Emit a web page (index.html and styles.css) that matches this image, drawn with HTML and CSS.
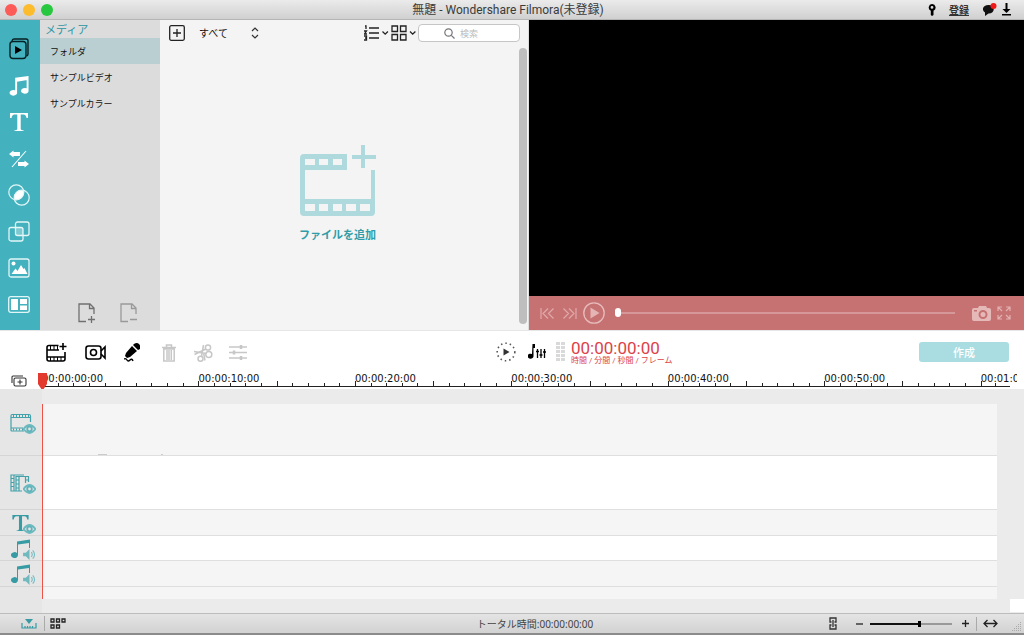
FILE: index.html
```html
<!DOCTYPE html>
<html lang="ja">
<head>
<meta charset="utf-8">
<meta name="viewport" content="width=device-width, initial-scale=1">
<title>無題 - Wondershare Filmora(未登録)</title>
<link rel="stylesheet" href="styles.css">
</head>
<body>
<svg class="defs" width="0" height="0" aria-hidden="true">
  <symbol id="note" viewBox="0 0 22 22"><path d="M7 3 21 1v4L9 7v11a4 3 0 1 1-2-2zM19 5h2v11a4 3 0 1 1-2-2z"/></symbol>
  <symbol id="tee" viewBox="0 0 20 20"><path d="M1 1h18v5h-1.500q-.500-3.500-3-3.500H11.700V17q0 1.300 3 1.500V19H5.300v-.500q3-.200 3-1.500V2.500H5.500q-2.500 0-3 3.500H1z"/></symbol>
  <symbol id="eye" viewBox="0 0 13 10"><path d="M.500 5Q6.500-3 12.500 5 6.500 13 .500 5z" fill="#e6e6e6" stroke="#6cb9bf" stroke-width="1.800"/><circle cx="6.500" cy="5" r="2.300" fill="none" stroke="#5fb3ba" stroke-width="1.800"/></symbol>
  <symbol id="sound" viewBox="0 0 14 12"><path d="M0 4h3l4-4v12L3 8H0z"/><path d="M9 3.500q2 2.500 0 5M10.500 1.500q4 4.500 0 9" fill="none" stroke="#77bcc2" stroke-width="1.200"/></symbol>
</svg>

<header class="titlebar">
  <div class="lights"><button class="light red" aria-label="閉じる"></button><button class="light yellow" aria-label="しまう"></button><button class="light green" aria-label="拡大"></button></div>
  <h1>無題 - Wondershare Filmora(未登録)</h1>
  <div class="account">
    <button aria-label="キー"><svg width="8" height="12" viewBox="0 0 8 12"><path fill-rule="evenodd" d="M4 0a3.500 3.500 0 0 1 1.500 6.700V11L4 12 2.800 11V6.700A3.500 3.500 0 0 1 4 0zM4 2a1.400 1.400 0 1 0 0 2.800A1.400 1.400 0 0 0 4 2z"/></svg></button>
    <a href="#register">登録</a>
    <button aria-label="メッセージ"><svg width="14" height="13" viewBox="0 0 14 13"><path d="M5.500 2c7 0 7 8.500 0 8.500L2 13v-3.500C-2 7 0 2 5.500 2z" fill="#111"/><circle cx="10.500" cy="3" r="3" fill="#f21818"/></svg></button>
    <button aria-label="ダウンロード"><svg width="9" height="13" viewBox="0 0 9 13"><path d="M3.500 0h2v6H8.500l-4 4-4-4h3zM0 11h9v1.500H0z"/></svg></button>
  </div>
</header>

<main class="workspace">
  <nav class="modes" aria-label="素材の種類">
    <button aria-label="メディア"><svg width="20" height="22" viewBox="0 0 20 22" fill="none" stroke="#062023" stroke-width="1.400"><path d="M3 3q.300-2 2-2h12q2 0 2 2v13q0 1.600-1.500 2"/><rect x="1" y="3.500" width="16" height="17" rx="3"/><path d="m6 8 7 4-7 4z" fill="#000" stroke="none"/></svg></button>
    <button aria-label="音楽"><svg width="22" height="21" fill="#fff"><use href="#note"/></svg></button>
    <button aria-label="テキスト"><svg width="20" height="20" fill="#fff"><use href="#tee"/></svg></button>
    <button aria-label="トランジション"><svg width="20" height="18" viewBox="0 0 20 18" fill="#fff"><path d="m0 4 4.500-3.500V2H11v4H4.500v1.500zM20 14l-4.500-3.500V12H9v4h6.500v1.500z"/><path d="M17 1 3 17" stroke="#fff" stroke-width="1.100"/></svg></button>
    <button aria-label="フィルター"><svg width="22" height="22" viewBox="0 0 22 22" fill="none" stroke="#e2f6f7" stroke-width="1.200"><path d="M15.700 6.500A7.500 7.500 0 0 1 6.300 15.500 7.500 7.500 0 0 1 15.700 6.500z" fill="#fff" stroke="none"/><circle cx="8.300" cy="8.300" r="7.500"/><circle cx="13.700" cy="13.700" r="7.500"/></svg></button>
    <button aria-label="オーバーレイ"><svg width="22" height="21" viewBox="0 0 22 21" fill="none" stroke="#e2f6f7" stroke-width="1.300"><rect x="1" y="6.500" width="14" height="13.500" rx="2"/><rect x="7.500" y="1" width="13.500" height="13.500" rx="2"/><path d="M7.500 6.500H15v8H7.500z" fill="#fff" fill-opacity=".3" stroke="none"/></svg></button>
    <button aria-label="エレメント"><svg width="22" height="20" viewBox="0 0 22 20"><rect x="1" y="1" width="20" height="18" rx="2" fill="none" stroke="#e2f6f7" stroke-width="1.300"/><circle cx="5.500" cy="5.500" r="2" fill="#fff"/><path d="m3.500 16 4-5.500 2 2.500 3.500-6 2.500 4 1-1 3 6z" fill="#fff"/></svg></button>
    <button aria-label="分割画面"><svg width="22" height="17" viewBox="0 0 22 17"><rect x=".7" y=".7" width="20.600" height="15.600" rx="2" fill="none" stroke="#e2f6f7" stroke-width="1.300"/><path d="M3 3h7v11H3zM12 3h7v5h-7zM12 9.500h7V14h-7z" fill="#fff"/></svg></button>
  </nav>

  <aside class="folders">
    <h2>メディア</h2>
    <ul>
      <li><button class="selected">フォルダ</button></li>
      <li><button>サンプルビデオ</button></li>
      <li><button>サンプルカラー</button></li>
    </ul>
    <div class="folder-actions">
      <button aria-label="フォルダを追加"><svg width="18" height="20" viewBox="0 0 18 20" fill="none" stroke="#707070" stroke-width="1.300"><path d="M8 18.500H1V1h11l4 4v6M11.500 1v4.500H16M13.500 13v7M10 16.500h7"/></svg></button>
      <button class="off" aria-label="フォルダを削除"><svg width="18" height="20" viewBox="0 0 18 20" fill="none" stroke="#999" stroke-width="1.300"><path d="M8 18.500H1V1h11l4 4v6M11.500 1v4.500H16M10 16.500h7"/></svg></button>
    </div>
    <button class="collapse" aria-label="パネルを閉じる"><svg width="7" height="12" viewBox="0 0 7 12"><path d="M7 0v12L0 6z" fill="#555"/></svg></button>
  </aside>

  <section class="library" aria-label="ライブラリ">
    <div class="library-bar">
      <button aria-label="追加"><svg width="16" height="16" viewBox="0 0 16 16" fill="none" stroke="#222" stroke-width="1.300"><rect x=".7" y=".7" width="14.600" height="14.600" rx="1.500"/><path d="M8 4v8M4 8h8"/></svg></button>
      <label class="filter"><select aria-label="表示"><option>すべて</option></select><svg width="8" height="12" viewBox="0 0 8 12" fill="none" stroke="#333" stroke-width="1.200"><path d="m1 4 3-3 3 3M1 8l3 3 3-3"/></svg></label>
      <button class="sort" aria-label="並べ替え"><svg width="25" height="16" viewBox="0 0 25 16" fill="none" stroke="#222" stroke-width="1.300"><path d="M5 3h10M5 8h10M5 13h10M1 1h1v3M0 6h2.500L.500 9H3M0 11h2.500v4H0M1 13h1"/><path d="m18.500 6.500 2.700 2.700 2.700-2.700"/></svg></button>
      <button aria-label="表示方法"><svg width="26" height="16" viewBox="0 0 26 16" fill="none" stroke="#222" stroke-width="1.300"><path d="M1 1h5.500v5.500H1zM9.500 1H15v5.500H9.500zM1 9.500h5.500V15H1zM9.500 9.500H15V15H9.500zM19 6.500l2.700 2.700 2.700-2.700"/></svg></button>
      <label class="search"><svg width="11" height="11" viewBox="0 0 11 11" fill="none" stroke="#777" stroke-width="1.200"><circle cx="4.500" cy="4.500" r="3.700"/><path d="m7.300 7.300 3.200 3.200"/></svg><input type="text" placeholder="検索" aria-label="検索"></label>
    </div>
    <button class="add-file">
      <svg width="76" height="72" viewBox="0 0 76 72" fill="#aed9dd"><path fill-rule="evenodd" d="M4 9h43v16H5v29h66V25h4v42q0 4-4 4H4q-4 0-4-4V13q0-4 4-4zM5 14v6h10v-6zM19 14v6h9v-6zM33 14v6h9v-6zM5 59v7h10v-7zM19 59v7h9v-7zM33 59v7h9v-7zM46 59v7h10v-7zM60 59v7h10v-7z"/><path d="M61 0h4v10h11v4H65v9h-4v-9H52v-4h9z"/></svg>
      <span>ファイルを追加</span>
    </button>
    <div class="scrollbar"></div>
  </section>

  <section class="preview" aria-label="プレビュー">
    <div class="screen"></div>
    <div class="player">
      <button aria-label="前へ"><svg width="14" height="11" viewBox="0 0 14 11" fill="none" stroke="#e1a9aa" stroke-width="1.200"><path d="M1 0v11M8 .500l-5 5 5 5M13.500.500l-5 5 5 5"/></svg></button>
      <button class="next" aria-label="次へ"><svg width="14" height="11" viewBox="0 0 14 11" fill="none" stroke="#e1a9aa" stroke-width="1.200"><path d="M13 0v11M6 .500l5 5-5 5M.500.500l5 5-5 5"/></svg></button>
      <button class="play" aria-label="再生"><svg width="22" height="22" viewBox="0 0 22 22"><circle cx="11" cy="11" r="10.200" fill="none" stroke="#e8bcbc" stroke-width="1.300"/><path d="m7.500 5.500 9 5.500-9 5.500z" fill="#e5b4b4"/></svg></button>
      <input class="seek" type="range" min="0" max="100" value="0" aria-label="再生位置">
      <button aria-label="スナップショット"><svg width="19" height="15" viewBox="0 0 19 15"><path fill-rule="evenodd" d="M6 2 7 0h7l1 2h2q2 0 2 2v9q0 2-2 2H2q-2 0-2-2V4q0-2 2-2zM11 4a4.500 4.500 0 1 0 0 9 4.500 4.500 0 0 0 0-9zM2 4v1.500h3V4zM11 6a2.500 2.500 0 1 1 0 5 2.500 2.500 0 0 1 0-5z" fill="#e6b9b9"/></svg></button>
      <button class="full" aria-label="全画面"><svg width="14" height="14" viewBox="0 0 14 14" fill="none" stroke="#e3b0b0" stroke-width="1.200"><path d="M1 5V1h4M1 1l4 4M9 1h4v4M13 1 9 5M1 9v4h4M1 13l4-4M13 9v4H9M13 13 9 9"/></svg></button>
    </div>
  </section>
</main>

<section class="toolbar">
  <div class="tools">
    <button aria-label="メディアを追加"><svg width="21" height="19" viewBox="0 0 21 19" fill="none" stroke="#000" stroke-width="1.600"><path d="M12.500 2.500H3Q1 2.500 1 4.500V16q0 2 2 2h14q2 0 2-2V9M1 7h12M1 14h18M17 0v7M13.500 3.500h7"/><path d="M4.500 3v4M8 3v4M11.500 3v4M4.500 14v4M8 14v4M11.500 14v4M15 14v4" stroke-width="1"/></svg></button>
    <button class="rec" aria-label="録画"><svg width="21" height="15" viewBox="0 0 21 15" fill="none" stroke="#000" stroke-width="1.600"><rect x="1" y="1" width="15" height="13" rx="2.500"/><circle cx="8.500" cy="7.500" r="3"/><path d="m16 6 4-4v11l-4-4"/></svg></button>
    <button class="mic" aria-label="録音"><svg width="16" height="19" viewBox="0 0 16 19"><path d="M10 1q3-2 5 0t1 5l-2 1-5-5zM8 3l5 5-7 6-3 1-2-2 1-3z"/><path d="M0 16q2-1 3 1t3 0 3 1" fill="none" stroke="#000" stroke-width="1.400"/></svg></button>
    <button class="trash" disabled aria-label="削除"><svg width="14" height="18" viewBox="0 0 14 18" fill="none" stroke="#c7c7c7" stroke-width="1.500"><path d="M0 3.500h14M4.500 3V1h5v2M1.800 5h10.400v12H1.800zM5 6v10M7 6v10M9.300 6v10"/></svg></button>
    <button class="cut" disabled aria-label="分割"><svg width="20" height="18" viewBox="0 0 20 18" fill="none" stroke="#c7c7c7" stroke-width="1.500"><circle cx="7.500" cy="14.700" r="2.500"/><circle cx="15.800" cy="10.500" r="3"/><circle cx="15" cy="3.500" r="2.600"/><path d="M8.500 12.500 10.500 1M13 9.500 1 7.500M1.500 10.500 12.800 5M10.500 8.500 12 16.500"/></svg></button>
    <button disabled aria-label="調整"><svg width="18" height="15" viewBox="0 0 18 15" fill="none" stroke="#c7c7c7" stroke-width="1.400"><path d="M0 2h18M0 7.500h18M0 13h18"/><path d="M12 0v4M5 5.500v4M12 11v4" stroke-width="2.500"/></svg></button>
  </div>
  <div class="status-tools">
    <button aria-label="レンダリング"><svg width="20" height="20" viewBox="0 0 20 20"><circle cx="10" cy="10" r="8.800" fill="none" stroke="#555" stroke-width="1.600" stroke-dasharray="1.500 3"/><path d="m7.500 6.500 6 3.500-6 3.500z" fill="#333"/></svg></button>
    <button class="mixer" aria-label="オーディオミキサー"><svg width="18" height="15" viewBox="0 0 18 15"><path d="M4.500 0H7v4H5.500v8a3 2.500 0 1 1-1.500-2z"/><path d="M9.500 5v9M13 5v9M16.500 5v9M8 7.500h3M11.500 11h3M15 8h3" stroke="#000" stroke-width="1.300"/></svg></button>
    <svg class="meter" width="9" height="22" viewBox="0 0 9 22" stroke="#d9d9d9" stroke-width="4" stroke-dasharray="3 1"><path d="M2 1v20M7 1v20"/></svg>
    <div class="timecode"><strong>00:00:00:00</strong><small>時間 / 分間 / 秒間 / フレーム</small></div>
    <button class="create">作成</button>
  </div>
</section>

<section class="ruler-row">
  <button class="add-track" aria-label="トラックを追加"><svg width="16" height="12" viewBox="0 0 16 12" fill="none" stroke="#333" stroke-width="1.100"><path d="M1 8V2q0-1 1-1h10"/><rect x="3" y="3" width="12" height="8" rx="1.500"/><path d="M9 4.500v5M6.500 7h5"/></svg></button>
  <div class="ruler"></div>
  <svg class="marker" width="9" height="17" viewBox="0 0 9 17"><path d="M0 0h9v11l-4 6h-1l-4-6z" fill="#e23a2e"/></svg>
</section>

<section class="timeline" aria-label="タイムライン">
  <div class="row video">
    <div class="head"><svg width="27" height="21" viewBox="0 0 27 21" fill="none" stroke="#43a2a9" stroke-width="1.200"><path d="M14 18H2q-1 0-1-1V3q0-1.500 1-1.500h17q1.500 0 1.500 1.500v6M1 4.500h19M1 15h12"/><path d="M3 3h17M3 16.500h10" stroke-dasharray="1 2" stroke-width="2"/><use href="#eye" x="13" y="11" width="13" height="10"/></svg></div>
    <div class="lane"></div>
  </div>
  <div class="row overlay">
    <div class="head"><svg width="27" height="21" viewBox="0 0 27 21" fill="none" stroke="#43a2a9" stroke-width="1.200"><path d="M14 2H1v16h11M4 2v16M1 5.500h3M1 9.500h3M1 13.500h3M6 18V3.500h12.500V9M9 4v14M6 7h3M6 11h3M6 15h3M15.500 4v6M15.500 7h3"/><use href="#eye" x="13" y="11" width="13" height="10"/></svg></div>
    <div class="lane"></div>
  </div>
  <div class="row text">
    <div class="head"><svg width="27" height="21" viewBox="0 0 27 21" fill="#369ba3"><use href="#tee" x="1" y="1" width="19" height="18"/><use href="#eye" x="13" y="11" width="13" height="10"/></svg></div>
    <div class="lane"></div>
  </div>
  <div class="row music">
    <div class="head"><svg width="27" height="21" viewBox="0 0 27 21" fill="#369ba3"><path d="M7 2.500 20 .500V9h-1V4L8 5.500V16a3.500 3 0 1 1-1-2z"/><g fill="#6fb9bf"><use href="#sound" x="13" y="10" width="13" height="11"/></g></svg></div>
    <div class="lane"></div>
  </div>
  <div class="row sound">
    <div class="head"><svg width="27" height="21" viewBox="0 0 27 21" fill="#369ba3"><path d="M7 2.500 20 .500V9h-1V4L8 5.500V16a3.500 3 0 1 1-1-2z"/><g fill="#6fb9bf"><use href="#sound" x="13" y="10" width="13" height="11"/></g></svg></div>
    <div class="lane"></div>
  </div>
  <div class="row rest"><div class="head"></div><div class="lane"></div></div>
  <div class="playhead"></div>
  <div class="corner"></div>
</section>

<footer class="statusbar">
  <div class="views">
    <button aria-label="タイムライン表示"><svg width="16" height="11" viewBox="0 0 16 11" fill="none" stroke="#369ba3" stroke-width="1.200"><path d="M1 5v5h14V5M4 8v2M6.500 8v2M9 8v2M11.500 8v2"/><path d="M4 1h8L8 6z" fill="#369ba3" stroke="none"/></svg></button>
    <button class="board" aria-label="ストーリーボード表示"><svg width="16" height="11" viewBox="0 0 16 11" fill="none" stroke="#222" stroke-width="1.300"><path d="M1 1h3v3H1zM6.500 1h3v3h-3zM12 1h3v3h-3zM1 7h3v3H1zM6.500 7h3v3h-3z"/></svg></button>
  </div>
  <p>トータル時間:00:00:00:00</p>
  <div class="zoom">
    <button aria-label="リンク"><svg width="8" height="13" viewBox="0 0 8 13" fill="none" stroke="#333" stroke-width="1.300"><path d="M2.500 5H1V1h6v4H5.500M2.500 8H1v4h6V8H5.500M4 3v7"/></svg></button>
    <button class="minus" aria-label="縮小"><svg width="7" height="7" viewBox="0 0 7 7"><path d="M0 4h7" stroke="#222" stroke-width="1.300"/></svg></button>
    <input class="scale" type="range" min="0" max="100" value="61" aria-label="ズーム">
    <button aria-label="拡大"><svg width="7" height="7" viewBox="0 0 7 7"><path d="M0 3.500h7M3.500 0v7" stroke="#222" stroke-width="1.300"/></svg></button>
    <button class="fit" aria-label="全体表示"><svg width="15" height="9" viewBox="0 0 15 9" fill="none" stroke="#222" stroke-width="1.300"><path d="M1 4.500h13M4.500 1 1 4.500 4.500 8M10.500 1 14 4.500 10.500 8"/></svg></button>
    <svg class="grip" width="10" height="10" viewBox="0 0 10 10" stroke="#aaa" stroke-width="1" stroke-dasharray="1 1"><path d="M0 9.500h10M2 7.500h8M4 5.500h6M6 3.500h4M8 1.500h2"/></svg>
  </div>
</footer>
<script src="ruler.js"></script>
</body>
</html>
```
FILE: styles.css
```css
* { box-sizing: border-box; }
body {
  margin: 0;
  min-height: 100vh;
  display: flex;
  flex-direction: column;
  font-family: "Noto Sans", "Noto Sans CJK JP", sans-serif;
  font-size: 11px;
  color: #222;
  background: #fff;
}
button {
  margin: 0;
  padding: 0;
  border: 0;
  background: none;
  font: inherit;
  color: inherit;
  display: flex;
  align-items: center;
  justify-content: center;
}
svg { display: block; flex: none; }
.defs { position: absolute; }
h1, h2, p, ul { margin: 0; padding: 0; list-style: none; }

.titlebar {
  height: 20px;
  display: grid;
  grid-template-columns: 1fr auto 1fr;
  align-items: center;
  padding: 0 13px 0 5px;
  background: linear-gradient(#ebebeb, #d0d0d0);
  border-bottom: 1px solid #b5b5b5;
}
.titlebar h1 { font: 400 12px/18px Roboto, "Noto Sans CJK JP", sans-serif; color: #3b3b3b; }
.lights { display: flex; gap: 6px; }
.light { width: 12px; height: 12px; border-radius: 50%; }
.red { background: #fc5b57; }
.yellow { background: #fdbc2e; }
.green { background: #27c83f; }
.account { display: flex; align-items: center; justify-content: flex-end; }
.account a { color: #333; font-size: 10px; font-weight: 700; line-height: 16px; margin: 0 14px 0 13px; }
.account button + button { margin-left: 5px; }

.workspace {
  flex: 1 0 310px;
  display: grid;
  grid-template-columns: 40px 120px 369px 1fr;
}
.modes {
  background: #43b2be;
  display: flex;
  flex-direction: column;
  justify-content: space-between;
  padding: 11px 3px 7px 0;
}
.modes button { height: 36px; }
.folders {
  position: relative;
  background: #dcdcdc;
  display: flex;
  flex-direction: column;
}
.folders h2 { font-size: 11px; font-weight: 400; line-height: 18px; padding: 1px 5px 0; height: 18px; color: #2c96a3; }
.folders li button { width: 100%; height: 26px; padding-left: 10px; justify-content: flex-start; font-size: 9px; color: #111; }
.folders .selected { background: #b9cfd1; }
.folder-actions { margin-top: auto; display: flex; gap: 24px; padding: 0 0 7px 38px; }
.collapse {
  position: absolute;
  left: 100%;
  top: 136px;
  width: 12px;
  height: 40px;
  padding-right: 5px;
  background: #dcdcdc;
  border-radius: 0 12px 12px 0;
}

.library { position: relative; background: #f4f4f4; border-right: 1px solid #ddd; display: flex; flex-direction: column; align-items: center; }
.library-bar { width: 100%; display: flex; align-items: center; padding: 4px 8px 0 9px; }
.filter { display: flex; align-items: center; margin-left: 14px; }
.filter select { appearance: none; border: 0; background: none; padding: 0; width: 52px; font: inherit; font-size: 10px; color: #111; }
.sort { margin: 0 2px 0 auto; }
.search {
  width: 102px;
  height: 18px;
  margin-left: 1px;
  border: 1px solid #c6c6c6;
  border-radius: 4px;
  background: #fff;
  display: flex;
  align-items: center;
  gap: 5px;
  padding-left: 25px;
}
.search input { width: 100%; min-width: 0; padding: 0; border: 0; outline: 0; background: none; font: inherit; font-size: 9px; }
.search input::placeholder { color: #bbb; }
.add-file { flex-direction: column; gap: 10px; margin: 103px 13px 0 0; font-size: 11px; line-height: 16px; font-weight: 700; color: #2f9da8; }
.scrollbar { position: absolute; right: 1px; top: 28px; bottom: 6px; width: 8px; border-radius: 4px; background: #bebebe; }

.preview { display: flex; flex-direction: column; }
.screen { flex: 1; background: #000; }
.player { height: 34px; display: flex; align-items: center; padding: 0 13px 0 11px; background: #c67273; }
.next { margin-left: 9px; }
.play { margin: 0 10px 0 6px; }
.full { margin-left: 6px; }
:where(input[type="range"]) { appearance: none; margin: 0; background: none; }
.seek { flex: 1; min-width: 0; height: 10px; margin: 0 17px 0 0; }
.seek::-webkit-slider-runnable-track { height: 2px; background: #d59798; }
.seek::-webkit-slider-thumb { appearance: none; width: 6px; height: 9px; margin-top: -4px; border-radius: 3px; background: #fff; }

.toolbar {
  height: 42px;
  border-top: 1px solid #e6e6e6;
  display: grid;
  grid-template-columns: 31fr 33fr;
  align-items: center;
}
.tools { display: flex; align-items: center; padding: 2px 0 0 46px; }
.rec { margin-left: 18px; }
.mic { margin-left: 18px; }
.trash { margin-left: 22px; }
.cut { margin: 0 16px 0 17px; }
.status-tools { display: flex; align-items: center; padding-right: 15px; }
.mixer { margin: 0 10px 0 12px; }
.timecode { display: flex; flex-direction: column; margin-left: 6px; color: #dc4248; }
.timecode strong { font: 400 17px/18px Roboto, sans-serif; }
.timecode small { font: 8px/8px Roboto, "Noto Sans CJK JP", sans-serif; white-space: nowrap; }
.create { margin-left: auto; width: 90px; height: 20px; border-radius: 3px; background: #a9dde2; color: #fff; font-size: 11px; font-weight: 500; }

.ruler-row { position: relative; height: 17px; display: flex; padding-right: 7px; }
.add-track { width: 42px; flex: none; padding-right: 5px; }
.ruler { flex: 1; min-width: 0; margin-right: 7px; height: 15px; display: grid; grid-template-columns: repeat(6, 16fr) 3fr; border-bottom: 1px solid #222; }
.unit { min-width: 0; position: relative; display: flex; align-items: flex-end; }
.unit span { position: absolute; left: 0; top: 0; font: 10px/14px "DejaVu Sans", sans-serif; white-space: nowrap; color: #111; }
.unit:last-child span { width: 36px; overflow: hidden; }
.unit i { flex: 1; height: 3px; border-left: 1px solid #222; }
.unit i:nth-of-type(5n + 1) { height: 5px; }
.marker { position: absolute; left: 38px; top: 1px; }

.timeline {
  position: relative;
  padding: 15px 0 14px;
  background: linear-gradient(to right, #e6e6e6 42px, #ebebeb 42px);
}
.row { display: flex; padding-right: 27px; }
.head { width: 42px; padding: 2px 0 0 10px; display: flex; align-items: center; border-bottom: 1px solid #d5d5d5; }
.lane { flex: 1; background: #f5f5f5; border-bottom: 1px solid #dfdfdf; }
.video { height: 52px; }
.video .head { padding-bottom: 14px; }
.video .lane {
  background:
    linear-gradient(#ccc, #ccc) 56px 100% / 9px 1px no-repeat,
    linear-gradient(#ccc, #ccc) 119px 100% / 2px 1px no-repeat,
    #f5f5f5;
}
.overlay { height: 54px; }
.text, .sound { height: 26px; }
.music { height: 25px; }
.overlay .lane, .music .lane { background: #fff; }
.rest { height: 12px; }
.rest .head, .rest .lane { border-bottom: 0; }
.playhead { position: absolute; left: 42px; top: 15px; bottom: 14px; width: 1px; background: #ee5145; }
.corner { position: absolute; right: 0; bottom: 1px; width: 14px; height: 13px; background: #fff; }

.statusbar {
  height: 22px;
  display: grid;
  grid-template-columns: 1fr auto 1fr;
  align-items: center;
  background: linear-gradient(#e4e4e4, #d2d2d2);
  border-top: 1px solid #bcbcbc;
  border-bottom: 2px solid #8b8b8b;
}
.views { display: flex; align-items: center; padding-left: 21px; }
.board { height: 15px; margin-left: 7px; padding-left: 5px; border-left: 1px solid #aaa; }
.statusbar p { font-size: 10px; line-height: 16px; padding-left: 46px; color: #444; }
.zoom { display: flex; align-items: center; justify-content: flex-end; padding-right: 2px; }
.minus { margin: 0 7px 0 19px; }
.scale { width: 82px; height: 8px; margin: 0 10px 0 0; }
.scale::-webkit-slider-runnable-track { height: 2px; background: linear-gradient(to right, #111 61%, #999 61%); }
.scale::-webkit-slider-thumb { appearance: none; width: 3px; height: 6px; margin-top: -2px; background: #000; }
.fit { height: 14px; margin: 0 14px 0 7px; padding-left: 6px; border-left: 1px solid #aaa; }
.grip { align-self: flex-end; }
```
FILE: ruler.js
```js
const ruler = document.querySelector('.ruler');
const labels = ['00:00:00:00', '00:00:10:00', '00:00:20:00', '00:00:30:00', '00:00:40:00', '00:00:50:00', '00:01:00:00'];
labels.forEach((label, index) => {
  const unit = document.createElement('div');
  unit.className = 'unit';
  const text = document.createElement('span');
  text.textContent = label;
  unit.append(text);
  const ticks = index < 6 ? 10 : 2;
  for (let n = 0; n < ticks; n += 1) unit.append(document.createElement('i'));
  ruler.append(unit);
});
```
